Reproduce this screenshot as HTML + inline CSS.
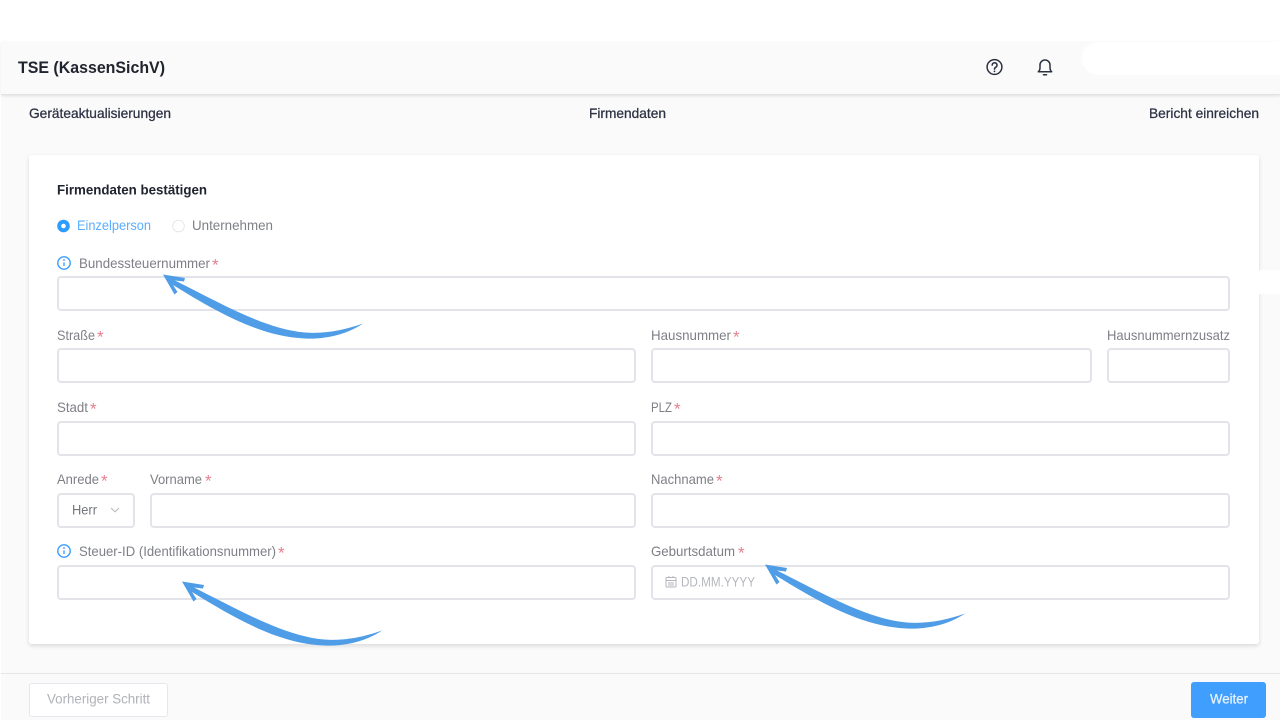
<!DOCTYPE html>
<html lang="de">
<head>
<meta charset="utf-8">
<title>TSE (KassenSichV)</title>
<style>
html,body{margin:0;padding:0;width:1280px;height:720px;overflow:hidden;background:#fff;font-family:"Liberation Sans",sans-serif}
.b{position:absolute;box-sizing:border-box}
#page{left:1px;top:42px;width:1279px;height:678px;background:#fafafa}
#head{left:1px;top:42px;width:1279px;height:53px;background:#fafafa;border-bottom:1px solid #e2e2e2;box-shadow:0 1px 3px rgba(0,0,0,.1)}
#pill{left:1082px;top:42px;width:198px;height:33px;background:#fff;border-radius:16px 0 0 16px}
#card{left:29px;top:155px;width:1230px;height:489px;background:#fff;border-radius:3px;box-shadow:0 2px 5px rgba(0,0,0,.13)}
#strip{left:1259px;top:270px;width:21px;height:24px;background:#fff}
#foot{left:1px;top:673px;width:1279px;height:1px;background:#e6e6e6}
.i{background:#fff;border:2px solid #e2e4ea;border-radius:4px}
#prev{left:29px;top:683px;width:139px;height:34px;background:#fff;border:1px solid #e6e8ee;border-radius:3px}
#next{left:1191px;top:682px;width:75px;height:36px;background:#409eff;border-radius:3px}
svg{position:absolute;left:0;top:0}
text{font-family:"Liberation Sans",sans-serif;font-size:13.6px;fill:#7e8086}
.h{fill:#2c3142;stroke:#2c3142;stroke-width:.25px}
.s{fill:#e8808f;font-size:17px}
</style>
</head>
<body>
<div class="b" id="page"></div>
<div class="b" id="head"></div>
<div class="b" id="pill"></div>
<div class="b" id="card"></div>
<div class="b" id="strip"></div>
<div class="b" id="foot"></div>

<div class="b i" style="left:57px;top:276px;width:1173px;height:35px"></div>
<div class="b i" style="left:57px;top:348px;width:579px;height:35px"></div>
<div class="b i" style="left:651px;top:348px;width:441px;height:35px"></div>
<div class="b i" style="left:1107px;top:348px;width:123px;height:35px"></div>
<div class="b i" style="left:57px;top:421px;width:579px;height:35px"></div>
<div class="b i" style="left:651px;top:421px;width:579px;height:35px"></div>
<div class="b i" style="left:57px;top:493px;width:78px;height:35px"></div>
<div class="b i" style="left:150px;top:493px;width:486px;height:35px"></div>
<div class="b i" style="left:651px;top:493px;width:579px;height:35px"></div>
<div class="b i" style="left:57px;top:565px;width:579px;height:35px"></div>
<div class="b i" style="left:651px;top:565px;width:579px;height:35px"></div>
<div class="b" id="prev"></div>
<div class="b" id="next"></div>

<svg width="1280" height="720" viewBox="0 0 1280 720" xmlns="http://www.w3.org/2000/svg">
<defs>
<path id="arrow" fill="#4f9de6" d="M163 274.5 L185 278 L184 281.500 L175 280.500 C222 304 265 329 305 332.500 C325 334 345 330 363 323.500 C347 334.500 325 339.500 305 338.500 C262 337 220 314 173 285 L177.500 292 L174.500 294.500 Z"/>
</defs>

<text x="18" y="73" textLength="147" lengthAdjust="spacingAndGlyphs" style="font-size:16.500px;font-weight:700;fill:#20242f">TSE (KassenSichV)</text>
<text class="h" x="29" y="118" textLength="142" lengthAdjust="spacingAndGlyphs">Geräteaktualisierungen</text>
<text class="h" x="589" y="118" textLength="77" lengthAdjust="spacingAndGlyphs">Firmendaten</text>
<text class="h" x="1149" y="118" textLength="110" lengthAdjust="spacingAndGlyphs">Bericht einreichen</text>
<text x="57" y="194.500" textLength="150" lengthAdjust="spacingAndGlyphs" style="font-weight:700;fill:#20242f">Firmendaten bestätigen</text>

<!-- header icons -->
<g fill="none" stroke="#2c3142" stroke-width="1.500" stroke-linecap="round" stroke-linejoin="round">
<circle cx="994.500" cy="67" r="7.400"/>
<path d="M992.200 65.100a2.400 2.400 0 1 1 3.600 2.100c-.9.500-1.300 1-1.300 1.900"/>
<path d="M1038.300 71.800c1.100-1 1.700-2 1.700-3.800v-3a5 5 0 0 1 10 0v3c0 1.800.6 2.800 1.700 3.800z"/>
<path d="M1043.500 74.700h3"/>
</g>
<circle cx="994.500" cy="71.400" r=".9" fill="#2c3142"/>

<!-- radios -->
<circle cx="63.500" cy="226" r="6.300" fill="#2d9cff"/>
<circle cx="63.500" cy="226" r="2.300" fill="#fff"/>
<circle cx="178.500" cy="226" r="5.800" fill="#fff" stroke="#e6e6e6"/>
<text x="77" y="230" textLength="74" lengthAdjust="spacingAndGlyphs" style="fill:#5aaeff">Einzelperson</text>
<text x="192" y="230" textLength="81" lengthAdjust="spacingAndGlyphs">Unternehmen</text>

<!-- info icons -->
<g fill="none" stroke="#3b9eff" stroke-width="1.400">
<circle cx="64" cy="263" r="6.200"/>
<path d="M64 262.500v3.500"/>
<circle cx="64" cy="551" r="6.200"/>
<path d="M64 550.500v3.500"/>
</g>
<circle cx="64" cy="260" r=".9" fill="#3b9eff"/>
<circle cx="64" cy="548" r=".9" fill="#3b9eff"/>

<!-- labels -->
<text x="79" y="268" textLength="131" lengthAdjust="spacingAndGlyphs">Bundessteuernummer</text><text class="s" x="212" y="270.500">*</text>
<text x="57" y="340" textLength="38" lengthAdjust="spacingAndGlyphs">Straße</text><text class="s" x="97" y="342.500">*</text>
<text x="651" y="340" textLength="80" lengthAdjust="spacingAndGlyphs">Hausnummer</text><text class="s" x="733" y="342.500">*</text>
<text x="1107" y="340" textLength="123" lengthAdjust="spacingAndGlyphs">Hausnummernzusatz</text>
<text x="57" y="412" textLength="31" lengthAdjust="spacingAndGlyphs">Stadt</text><text class="s" x="90" y="414.500">*</text>
<text x="651" y="412" textLength="21" lengthAdjust="spacingAndGlyphs">PLZ</text><text class="s" x="674" y="414.500">*</text>
<text x="57" y="484" textLength="42" lengthAdjust="spacingAndGlyphs">Anrede</text><text class="s" x="101" y="486.500">*</text>
<text x="150" y="484" textLength="52" lengthAdjust="spacingAndGlyphs">Vorname</text><text class="s" x="205" y="486.500">*</text>
<text x="651" y="484" textLength="63" lengthAdjust="spacingAndGlyphs">Nachname</text><text class="s" x="716" y="486.500">*</text>
<text x="79" y="556" textLength="197" lengthAdjust="spacingAndGlyphs">Steuer-ID (Identifikationsnummer)</text><text class="s" x="278" y="558.500">*</text>
<text x="651" y="556" textLength="84" lengthAdjust="spacingAndGlyphs">Geburtsdatum</text><text class="s" x="738" y="558.500">*</text>

<!-- select -->
<text x="72" y="514.500" textLength="25" lengthAdjust="spacingAndGlyphs" style="fill:#74777d">Herr</text>
<path d="M111 508l4 3.800 4-3.800" fill="none" stroke="#b5b7bb" stroke-width="1"/>

<!-- date -->
<g fill="none" stroke="#b5b7bc" stroke-width="1">
<rect x="666" y="577.500" width="10" height="9.500" rx="1"/>
<path d="M666 580.500h10M668 583h6M668 585h6M669 576v2M673 576v2"/>
</g>
<text x="681" y="586.500" textLength="74" lengthAdjust="spacingAndGlyphs" style="fill:#b5b7bc">DD.MM.YYYY</text>

<!-- buttons -->
<text x="47" y="703.500" textLength="103" lengthAdjust="spacingAndGlyphs" style="fill:#b0b2b7">Vorheriger Schritt</text>
<text x="1210" y="703.500" textLength="38" lengthAdjust="spacingAndGlyphs" style="fill:#e8f3ff;stroke:#e8f3ff;stroke-width:.25px">Weiter</text>

<!-- arrows -->
<use href="#arrow"/>
<use href="#arrow" transform="translate(19 307)"/>
<use href="#arrow" transform="translate(602 290)"/>
</svg>
</body>
</html>
